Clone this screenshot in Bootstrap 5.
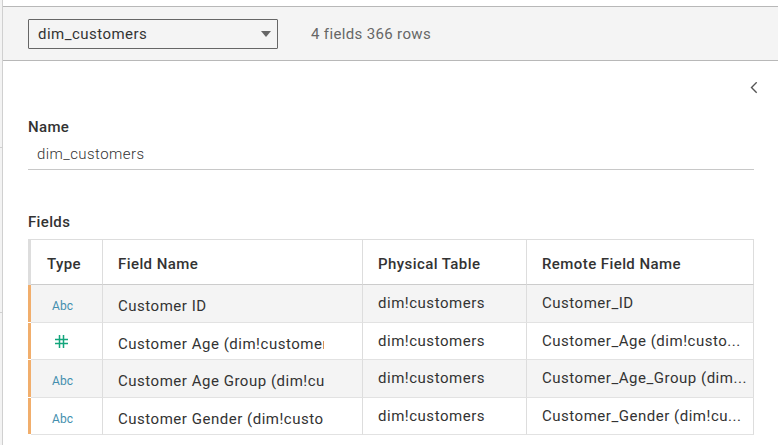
<!DOCTYPE html>
<html lang="en">
<head>
<meta charset="utf-8">
<meta name="viewport" content="width=device-width, initial-scale=1">
<title>dim_customers</title>
<link href="https://cdn.jsdelivr.net/npm/bootstrap@5.3.0/dist/css/bootstrap.min.css" rel="stylesheet">
<style>
body{font-family:Roboto,"Liberation Sans",sans-serif;font-size:15px;line-height:20px;color:#333;letter-spacing:.52px;height:445px}
.rail{width:3px;background:#f3f3f3;border-right:1px solid #d0d0d0}
.rail div{border-bottom:1px solid #d0d0d0}
.rail-a{height:148px}
.rail-b{height:165px}
.toolbar{margin-top:6px;height:55px;background:#f4f4f4;border-top:1px solid #b8b8b8;border-bottom:1px solid #b8b8b8;padding-left:25px}
.picker{width:250px;height:30px;border:1px solid #666;border-radius:1px;background:#f4f4f4;color:#333;padding:0 6px 0 9px;letter-spacing:.47px}
.summary{margin-left:33px;color:#666;letter-spacing:.35px}
.pane{padding:0 24px 0 25px}
.collapse-btn{height:56px;padding-top:21px;line-height:0;margin-right:-4px}
.heading{font-weight:500;letter-spacing:.35px}
.name-value{height:33px;padding:7px 0 0 9px;border-bottom:1px solid #c8c8c8;font-weight:300;letter-spacing:.43px}
.fields-heading{margin-top:42px}
.fields{margin-top:7px;width:726px;border-top:1px solid #ddd}
.line{display:grid;grid-template-columns:3px 72px 260px 164px 227px;height:37px}
.line>div{border-right:1px solid #ddd;border-bottom:1px solid #e2e2e2;white-space:nowrap;overflow:hidden}
.line>.edge{border-right:0;border-bottom:1px solid #fff;background:#f1ae6c}
.line.tall{height:38px}
.line.shade{background:#f4f4f4}
.line.titles{height:45px;font-weight:500;letter-spacing:.42px}
.line.titles>div{border-bottom-color:#ccc;padding:14px 0 0 15px}
.line.titles>.edge{background:#ddd;border-bottom-color:#ddd;padding:0}
.line.titles>.type-title{padding-left:16px}
.kind{padding:12px 0 0 21px;font-size:12px;line-height:18px;color:#438fae;letter-spacing:.1px}
.kind svg{display:block;margin:0 0 0 3px}
.field{padding:11px 38px 0 15px}
.field span{display:block;overflow:hidden;letter-spacing:.52px}
.plain{padding:8px 0 0 15px}
</style>
</head>
<body class="d-flex overflow-hidden bg-white">
<div class="rail flex-shrink-0"><div class="rail-a"></div><div class="rail-b"></div></div>
<main class="flex-grow-1">
<div class="toolbar d-flex align-items-center">
<button type="button" class="picker d-flex align-items-center justify-content-between"><span>dim_customers</span><svg width="10" height="6" viewBox="0 0 10 6"><path d="M0 0h10L5 6z" fill="#666"/></svg></button>
<span class="summary">4 fields 366 rows</span>
</div>
<div class="pane">
<div class="collapse-btn text-end"><svg width="8" height="12" viewBox="0 0 8 12"><path d="M6.7 .8L1.5 6l5.2 5.2" transform="translate(0 -.5)" fill="none" stroke="#555" stroke-width="1.4"/></svg></div>
<div class="heading">Name</div>
<div class="name-value">dim_customers</div>
<div class="heading fields-heading">Fields</div>
<div class="fields">
<div class="line titles"><div class="edge"></div><div class="type-title">Type</div><div>Field Name</div><div>Physical Table</div><div>Remote Field Name</div></div>
<div class="line tall shade"><div class="edge"></div><div class="kind">Abc</div><div class="field"><span>Customer ID</span></div><div class="plain">dim!customers</div><div class="plain">Customer_ID</div></div>
<div class="line"><div class="edge"></div><div class="kind"><svg width="13" height="13" viewBox="0 0 13 13"><path d="M4.5 0v13M8.5 0v13M0 4.5h13M0 8.5h13" fill="none" stroke="#12a57b" stroke-width="1.5"/></svg></div><div class="field"><span>Customer Age (dim!customer</span></div><div class="plain">dim!customers</div><div class="plain">Customer_Age (dim!custo...</div></div>
<div class="line tall shade"><div class="edge"></div><div class="kind">Abc</div><div class="field"><span>Customer Age Group (dim!cu</span></div><div class="plain">dim!customers</div><div class="plain">Customer_Age_Group (dim...</div></div>
<div class="line"><div class="edge"></div><div class="kind">Abc</div><div class="field"><span>Customer Gender (dim!custo</span></div><div class="plain">dim!customers</div><div class="plain">Customer_Gender (dim!cu...</div></div>
</div>
</div>
</main>
<script src="https://cdn.jsdelivr.net/npm/bootstrap@5.3.0/dist/js/bootstrap.bundle.min.js"></script>
</body>
</html>
